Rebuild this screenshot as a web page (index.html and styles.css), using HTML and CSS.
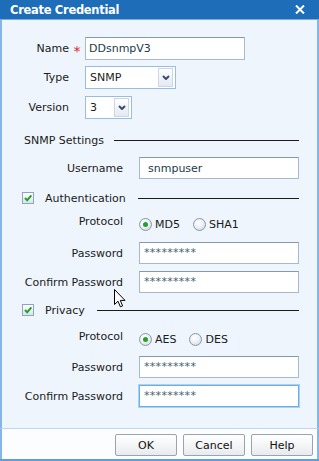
FILE: index.html
```html
<!DOCTYPE html>
<html>
<head>
<meta charset="utf-8">
<title>Create Credential</title>
<link rel="stylesheet" href="styles.css">
</head>
<body>
<div class="dialog">
  <div class="titlebar">
    <span class="title">Create Credential</span>
    <svg class="close" width="10" height="9" viewBox="0 0 10 9"><path d="M1 0.5L9 8.5M9 0.5L1 8.5" stroke="#fff" stroke-width="2"/></svg>
  </div>
  <div class="content">
    <div class="row h23 sp-name">
      <span class="lbl-a">Name</span><span class="req">*</span>
      <div class="field w-name pad-3">DDsnmpV3</div>
    </div>
    <div class="row h23 sp-6">
      <span class="lbl-a">Type</span><span class="req"></span>
      <div class="select w-type"><span>SNMP</span><span class="arrow"><svg width="8" height="5" viewBox="0 0 8 5"><path d="M1 1L4 4L7 1" fill="none" stroke="#3b4a73" stroke-width="2"/></svg></span></div>
    </div>
    <div class="row h23 sp-7">
      <span class="lbl-a">Version</span><span class="req"></span>
      <div class="select w-ver"><span>3</span><span class="arrow"><svg width="8" height="5" viewBox="0 0 8 5"><path d="M1 1L4 4L7 1" fill="none" stroke="#3b4a73" stroke-width="2"/></svg></span></div>
    </div>

    <div class="sect sp-13"><span>SNMP Settings</span><span class="rule"></span></div>

    <div class="row h22 sp-9">
      <span class="lbl-b">Username</span>
      <div class="field w-wide pad-8">snmpuser</div>
    </div>

    <div class="sect chk-sect sp-11">
      <span class="check"><svg width="10" height="10" viewBox="0 0 10 10"><path d="M2 5L4.2 7.3L8.3 2.4" fill="none" stroke="#23a023" stroke-width="2"/></svg></span>
      <span class="chk-label">Authentication</span><span class="rule"></span>
    </div>

    <div class="row radio-row sp-7">
      <span class="lbl-b">Protocol</span>
      <span class="opt"><span class="radio on"></span>MD5</span>
      <span class="opt"><span class="radio"></span>SHA1</span>
    </div>
    <div class="row h22 sp-11">
      <span class="lbl-b">Password</span>
      <div class="field w-wide pad-4 stars">*********</div>
    </div>
    <div class="row h22 sp-7">
      <span class="lbl-b">Confirm Password</span>
      <div class="field w-wide pad-4 stars">*********</div>
    </div>

    <div class="sect chk-sect sp-9">
      <span class="check"><svg width="10" height="10" viewBox="0 0 10 10"><path d="M2 5L4.2 7.3L8.3 2.4" fill="none" stroke="#23a023" stroke-width="2"/></svg></span>
      <span class="chk-label">Privacy</span><span class="rule"></span>
    </div>

    <div class="row radio-row sp-10">
      <span class="lbl-b">Protocol</span>
      <span class="opt"><span class="radio on"></span>AES</span>
      <span class="opt"><span class="radio"></span>DES</span>
    </div>
    <div class="row h22 sp-10">
      <span class="lbl-b">Password</span>
      <div class="field w-wide pad-4 stars">*********</div>
    </div>
    <div class="row h22 sp-7">
      <span class="lbl-b">Confirm Password</span>
      <div class="field w-wide pad-4 stars focus">*********</div>
    </div>
  </div>
  <div class="footer">
    <button class="btn">OK</button>
    <button class="btn">Cancel</button>
    <button class="btn">Help</button>
  </div>
</div>
<svg class="cursor" width="13" height="20" viewBox="0 0 13 20"><path d="M0.5 0.5L0.5 15.5L4 12.2L6.4 17.8L8.6 16.9L6.3 11.4L11 11.4Z" fill="#fff" stroke="#000" stroke-width="1" stroke-linejoin="miter"/></svg>
</body>
</html>
```

FILE: styles.css
```css
* { box-sizing: border-box; margin: 0; padding: 0; }
html, body { width: 319px; height: 461px; overflow: hidden; }
body {
  font-family: "DejaVu Sans", Verdana, sans-serif;
  font-size: 11px;
  color: #1b1b1b;
  position: relative;
  background: #eef5fd;
}
.dialog {
  width: 319px;
  height: 461px;
  display: flex;
  flex-direction: column;
  border-bottom: 2px solid #5f9ddb;
}
.titlebar {
  flex: none;
  height: 20px;
  background: #1d6db8;
  border-bottom: 1px solid #78aee6;
  display: flex;
  align-items: center;
  justify-content: space-between;
  padding: 0 14px 0 10px;
}
.title {
  color: #fff;
  font-weight: bold;
  font-size: 11.5px;
  letter-spacing: -0.3px;
}
.content {
  flex: 1;
  background: #eef5fd;
  border-left: 2px solid #86b6e8;
  border-right: 2px solid #86b6e8;
  display: flex;
  flex-direction: column;
}
.row { flex: none; display: flex; align-items: center; }
.h23 { height: 23px; }
.h22 { height: 22px; }
.sp-name { margin-top: 17px; }
.sp-6 { margin-top: 6px; }
.sp-7 { margin-top: 7px; }
.sp-9 { margin-top: 9px; }
.sp-10 { margin-top: 10px; }
.sp-11 { margin-top: 11px; }
.sp-13 { margin-top: 13px; }

.lbl-a { width: 67px; text-align: right; }
.req {
  width: 16px;
  text-align: center;
  color: #e0262a;
  font-size: 14px;
  line-height: 14px;
  padding-top: 5px;
  align-self: center;
}
.lbl-b { width: 121px; margin-right: 16px; text-align: right; }

.field {
  height: 100%;
  background: #fff;
  border: 1px solid #a7bacd;
  border-top-color: #8599ae;
  display: flex;
  align-items: center;
  color: #1d3b48;
}
.w-name { width: 160px; }
.w-wide { width: 160px; }
.pad-3 { padding-left: 3px; }
.pad-4 { padding-left: 4px; }
.pad-8 { padding-left: 8px; }
.stars { color: #3f636e; font-size: 11px; letter-spacing: 0.3px; align-items: flex-start; padding-top: 3px; }
.focus {
  border: 1px solid #6aaee8;
  box-shadow: 0 0 0 1px #a9d2f3;
}

.select {
  height: 100%;
  background: #fff;
  border: 1px solid #97bde7;
  display: flex;
  align-items: center;
  padding-left: 4px;
  color: #1b1b1b;
}
.w-type { width: 91px; }
.w-ver { width: 47px; }
.arrow {
  margin-left: auto;
  margin-right: 2px;
  width: 15px;
  height: 19px;
  border: 1px solid #ccd7e3;
  background: linear-gradient(#ffffff, #e3eaf2);
  display: flex;
  align-items: center;
  justify-content: center;
}

.sect {
  flex: none;
  height: 16px;
  display: flex;
  align-items: center;
  padding-left: 22px;
  padding-right: 18px;
}
.rule { flex: 1; height: 1px; background: #1b1b1b; margin-left: 10px; }
.chk-sect { padding-left: 20px; }
.chk-sect .rule { margin-left: 12px; }
.check {
  width: 12px;
  height: 12px;
  border: 1px solid #8ea5bd;
  background: linear-gradient(#ffffff, #dbe3ec);
  display: flex;
  align-items: center;
  justify-content: center;
}
.chk-label { margin-left: 11px; }

.radio-row { height: 18px; align-items: flex-start; }
.radio-row .lbl-b { line-height: 14px; padding-top: 2px; }
.opt {
  display: flex;
  align-items: center;
  gap: 3px;
  margin-top: 5px;
  margin-right: 13px;
  line-height: 13px;
}
.radio {
  width: 13px;
  height: 13px;
  border-radius: 50%;
  border: 1px solid #8797ac;
  background: radial-gradient(circle at 40% 35%, #ffffff 0%, #eef1f5 45%, #c9d1db 100%);
  display: flex;
  align-items: center;
  justify-content: center;
}
.radio.on::after {
  content: "";
  width: 5px;
  height: 5px;
  border-radius: 50%;
  background: #25a12b;
}

.footer {
  flex: none;
  height: 31px;
  background: #fcfdfe;
  border-top: 1px solid #c2d6eb;
  border-left: 2px solid #86b6e8;
  border-right: 2px solid #86b6e8;
  display: flex;
  justify-content: flex-end;
  gap: 6px;
  padding: 5px 4px 0 0;
}
.btn {
  width: 62px;
  height: 22px;
  border: 1px solid #98a4b3;
  border-radius: 2px;
  background: linear-gradient(#ffffff, #e8ebee);
  font-family: "DejaVu Sans", Verdana, sans-serif;
  font-size: 11px;
  color: #111;
}
.cursor { position: absolute; left: 114px; top: 289px; }
```
